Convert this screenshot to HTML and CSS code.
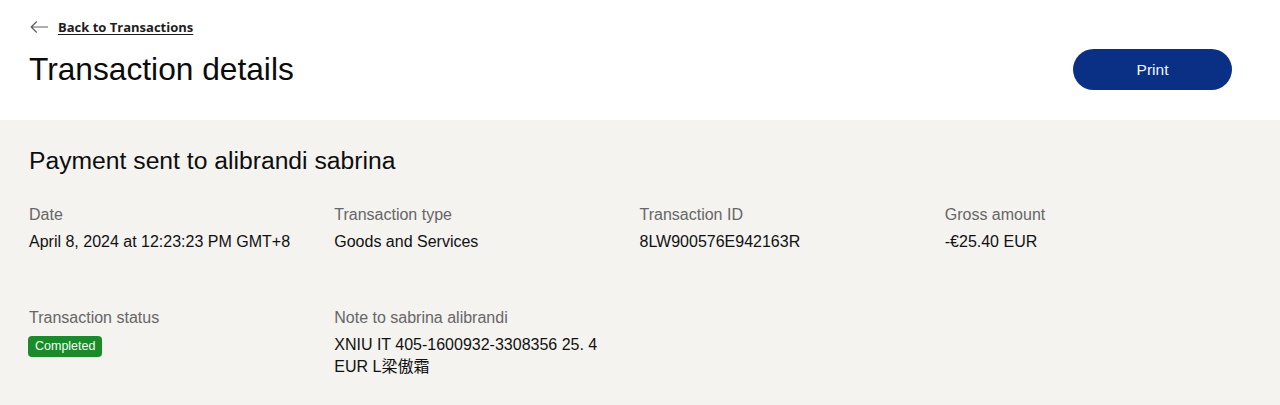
FILE: index.html
```html
<!DOCTYPE html>
<html lang="en">
<head>
<meta charset="utf-8">
<title>Transaction details</title>
<link rel="stylesheet" href="styles.css">
</head>
<body>
<header class="page-head">
  <a class="back-link" href="#">
    <svg class="back-icon" width="18" height="12" viewBox="0 0 18 12" aria-hidden="true">
      <path d="M17.5 6H1.2M6.5 0.8L1.2 6l5.3 5.2" fill="none" stroke="#5e5e5e" stroke-width="1.2" stroke-linecap="round" stroke-linejoin="round"/>
    </svg>
    <span class="back-text">Back to Transactions</span>
  </a>
  <div class="title-row">
    <h1 class="title">Transaction details</h1>
    <button class="print-btn" type="button">Print</button>
  </div>
</header>
<main class="details">
  <h2 class="subtitle">Payment sent to alibrandi sabrina</h2>
  <div class="grid">
    <div class="cell">
      <div class="label">Date</div>
      <div class="value">April 8, 2024 at 12:23:23 PM GMT+8</div>
    </div>
    <div class="cell">
      <div class="label">Transaction type</div>
      <div class="value">Goods and Services</div>
    </div>
    <div class="cell">
      <div class="label">Transaction ID</div>
      <div class="value">8LW900576E942163R</div>
    </div>
    <div class="cell">
      <div class="label">Gross amount</div>
      <div class="value">-€25.40 EUR</div>
    </div>
    <div class="cell">
      <div class="label">Transaction status</div>
      <div class="status"><span class="badge">Completed</span></div>
    </div>
    <div class="cell">
      <div class="label">Note to sabrina alibrandi</div>
      <div class="value note">XNIU IT 405-1600932-3308356 25. 4 EUR L梁傲霜</div>
    </div>
  </div>
</main>
</body>
</html>
```

FILE: styles.css
```css
html, body {
  margin: 0;
  padding: 0;
  background: #ffffff;
}
body {
  font-family: "Liberation Sans", Arial, "Noto Sans CJK SC", sans-serif;
  color: #111;
  height: 405px;
  overflow: hidden;
  display: flex;
  flex-direction: column;
}
.page-head {
  background: #fff;
  padding: 17px 48px 30px 29px;
}
.back-link {
  display: inline-flex;
  align-items: center;
  gap: 10px;
  text-decoration: none;
  color: #1d1d1d;
  height: 20px;
}
.back-icon {
  display: block;
  margin-left: 1px;
}
.back-text {
  font-family: "Open Sans", "Noto Sans", sans-serif;
  font-weight: 700;
  font-size: 13px;
  text-decoration: underline;
  text-underline-offset: 2px;
}
.title-row {
  display: flex;
  align-items: center;
  justify-content: space-between;
  margin-top: 12px;
  height: 41px;
}
.title {
  margin: 0;
  font-size: 31.7px;
  font-weight: 400;
  line-height: 41px;
  color: #0b0b0b;
}
.print-btn {
  width: 159px;
  height: 41px;
  border: none;
  border-radius: 21px;
  background: #0a3086;
  color: #f2f5fb;
  font-family: "Liberation Sans", Arial, sans-serif;
  font-size: 15.5px;
  cursor: pointer;
}
.details {
  flex: 1;
  background: #f4f3f0;
  padding: 26px 48px 0 29px;
}
.subtitle {
  margin: 0;
  font-size: 24.7px;
  font-weight: 400;
  line-height: 30px;
  color: #0d0d0d;
}
.grid {
  display: grid;
  grid-template-columns: repeat(4, 1fr);
  column-gap: 18px;
  row-gap: 55px;
  margin-top: 29px;
}
.label {
  font-size: 16px;
  line-height: 20px;
  color: #666;
}
.value {
  margin-top: 6px;
  font-size: 16px;
  line-height: 22px;
  color: #111;
}
.status {
  margin-top: 8px;
  display: flex;
}
.badge {
  display: inline-block;
  background: #1b8a2a;
  color: #f4fff4;
  font-size: 12.5px;
  line-height: 21px;
  padding: 0 7px;
  border-radius: 4px;
  margin-left: -1px;
}
```
